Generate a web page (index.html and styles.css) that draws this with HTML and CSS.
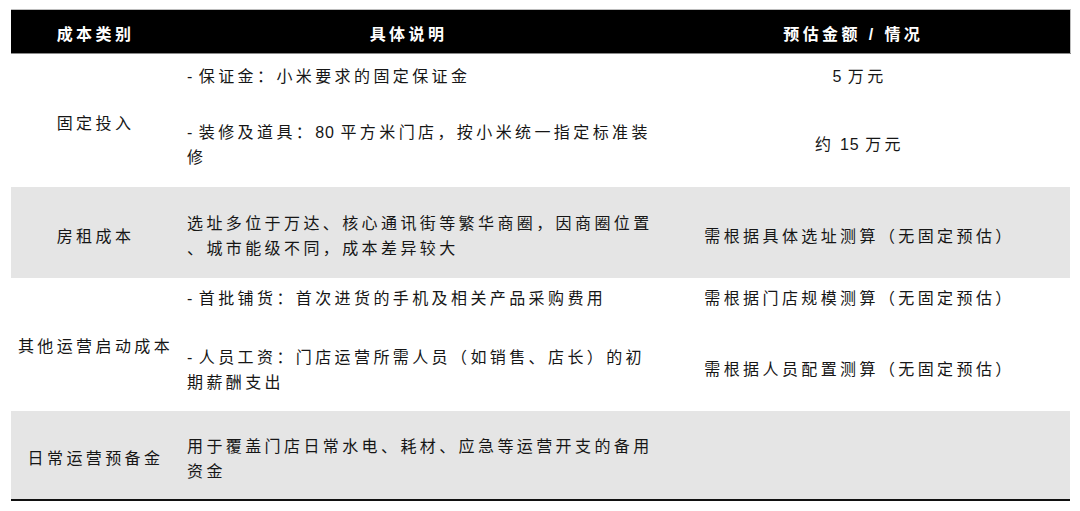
FILE: index.html
```html
<!DOCTYPE html>
<html lang="zh-CN">
<head>
<meta charset="utf-8">
<title>成本构成</title>
<link rel="stylesheet" href="styles.css">
</head>
<body>
<table class="cost-table">
  <colgroup><col class="c1"><col class="c2"><col class="c3"></colgroup>
  <thead>
    <tr><th>成本类别</th><th>具体说明</th><th class="last">预估金额 / 情况</th></tr>
  </thead>
  <tbody>
    <tr class="r1a">
      <td rowspan="2" class="cat cat-fixed">固定投入</td>
      <td class="desc"><span class="lat">- </span>保证金：小米要求的固定保证金</td>
      <td class="amt"><span class="lat">5 </span>万元</td>
    </tr>
    <tr class="r1b">
      <td class="desc"><span class="lat">- </span>装修及道具：<span class="lat">80 </span>平方米门店，按小米统一指定标准装<br>修</td>
      <td class="amt">约<span class="lat"> 15 </span>万元</td>
    </tr>
    <tr class="r2 shade">
      <td class="cat">房租成本</td>
      <td class="desc">选址多位于万达、核心通讯街等繁华商圈，因商圈位置<br>、城市能级不同，成本差异较大</td>
      <td class="amt">需根据具体选址测算（无固定预估）</td>
    </tr>
    <tr class="r3a">
      <td rowspan="2" class="cat cat-other">其他运营启动成本</td>
      <td class="desc"><span class="lat">- </span>首批铺货：首次进货的手机及相关产品采购费用</td>
      <td class="amt">需根据门店规模测算（无固定预估）</td>
    </tr>
    <tr class="r3b">
      <td class="desc"><span class="lat">- </span>人员工资：门店运营所需人员（如销售、店长）的初<br>期薪酬支出</td>
      <td class="amt">需根据人员配置测算（无固定预估）</td>
    </tr>
    <tr class="r4 shade">
      <td class="cat">日常运营预备金</td>
      <td class="desc">用于覆盖门店日常水电、耗材、应急等运营开支的备用<br>资金</td>
      <td class="amt"></td>
    </tr>
  </tbody>
</table>
</body>
</html>
```
FILE: styles.css
```css
html, body {
  margin: 0;
  background: #ffffff;
}
body {
  padding: 9px 10px 0 11px;
  font-family: "Liberation Sans", "Noto Sans CJK SC", sans-serif;
  font-size: 16px;
  line-height: 25px;
  color: #161616;
  letter-spacing: 3.4px;
}
.lat { letter-spacing: 1px; }
.cost-table {
  width: 1059px;
  table-layout: fixed;
  border-collapse: collapse;
  border-bottom: 2px solid #111111;
}
.c1 { width: 169px; }
.c2 { width: 457px; }
.c3 { width: 433px; }

th {
  background: #000000;
  color: #ffffff;
  font-weight: bold;
  text-align: center;
  vertical-align: middle;
  padding: 5px 0 0;
  border-top: 1px solid #bdbdbd;
  border-bottom: 1px solid #8a8a8a;
}
th.last { border-right: 1px solid #bdbdbd; }
thead tr { height: 44px; }

td {
  vertical-align: middle;
  padding: 8px 7px 0;
}
.shade td { background: #e5e5e5; }
.cat { text-align: center; padding-left: 0; padding-right: 0; }
.desc { white-space: nowrap; overflow: visible; text-align: left; }
.amt { text-align: center; padding-left: 12px; padding-right: 0; }

.r1a { height: 40px; }
.r1a td { padding-top: 6px; }
.r1b { height: 93px; }
.r1b td { padding-top: 9px; }
.r2 { height: 91px; }
.r2 td { padding-top: 8px; }
.r3a { height: 39px; }
.r3a td { padding-top: 3px; }
.r3b { height: 94px; }
.r3b td { padding-top: 12px; }
.r4 { height: 89px; }
.r4 td { padding-top: 8px; }

.r1a td.cat-fixed { padding-top: 7px; }
.r3a td.cat-other { padding-top: 4px; }
```
